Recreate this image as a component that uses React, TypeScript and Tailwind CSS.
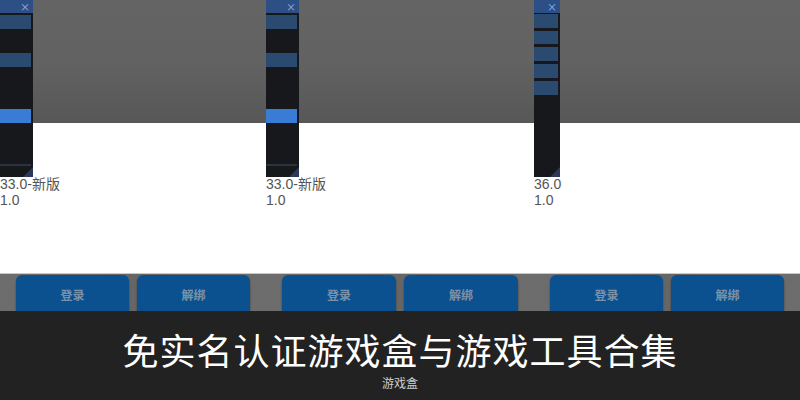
import React from "react";

type Panel = {
  version: string;
  sidebar: "a" | "b";
  sideWidth: string;
};

const panels: Panel[] = [
  { version: "33.0-新版", sidebar: "a", sideWidth: "w-[33px]" },
  { version: "33.0-新版", sidebar: "a", sideWidth: "w-[33px]" },
  { version: "36.0", sidebar: "b", sideWidth: "w-[26px]" },
];

const Sidebar = ({ kind, width }: { kind: "a" | "b"; width: string }) => (
  <div className={`absolute left-0 top-0 h-[177px] ${width} bg-[#17181c] flex flex-col overflow-hidden`}>
    <div className="h-[13px] shrink-0 bg-[#2c4f86] flex items-center justify-end pr-[3px] text-[10px] leading-none text-[#9db8e6]">
      ×
    </div>
    {kind === "a" ? (
      <div className="flex flex-col pr-[2px]">
        <div className="mt-[2px] h-[14px] bg-[#2a4a70]" />
        <div className="mt-[24px] h-[14px] bg-[#2a4a70]" />
        <div className="mt-[42px] h-[14px] bg-[#3a7bd5]" />
        <div className="mt-[41px] h-[2px] bg-[#2c3340]" />
      </div>
    ) : (
      <div className="flex flex-col gap-[3px] pt-[1px] pr-[2px]">
        <div className="h-[14px] bg-[#2a4a70]" />
        <div className="h-[13px] bg-[#2a4a70]" />
        <div className="h-[14px] bg-[#2a4a70]" />
        <div className="h-[14px] bg-[#2a4a70]" />
        <div className="h-[14px] bg-[#2a4a70]" />
      </div>
    )}
    <div className="mt-auto self-end w-0 h-0 border-l-[10px] border-l-transparent border-b-[10px] border-b-[#2b3a5a]" />
  </div>
);

const Btn = ({ label }: { label: string }) => (
  <div className="flex-1 h-[40px] shrink-0 rounded-[6px] bg-[#0b5190] shadow-[0_2px_2px_rgba(0,0,0,0.45)] flex items-center justify-center text-[12px] font-bold text-[#7b91a8]">
    {label}
  </div>
);

const PanelView = ({ p }: { p: Panel }) => (
  <div className="relative h-[311px] overflow-hidden flex flex-col">
    <div className="h-[123px] shrink-0 bg-gradient-to-b from-[#646464] via-[#626262] to-[#575757]" />
    <div className="h-[150px] shrink-0 bg-white pt-[54px] flex flex-col gap-[2px] text-[14px] leading-[14px] text-[#555] font-['Liberation_Sans','Noto_Sans_CJK_SC',sans-serif]">
      <div>{p.version}</div>
      <div>1.0</div>
    </div>
    <div className="flex-1 min-h-0 overflow-hidden border-t border-[#c9c9c9] bg-gradient-to-r from-[#6d6d6d] via-[#666] to-[#6d6d6d] flex items-start gap-[8px] px-[16px] pt-[1px]">
      <Btn label="登录" />
      <Btn label="解绑" />
    </div>
    <Sidebar kind={p.sidebar} width={p.sideWidth} />
  </div>
);

export default function App() {
  return (
    <div className="w-[800px] h-[400px] overflow-hidden bg-[#222] flex flex-col font-['Noto_Sans_CJK_SC',sans-serif]">
      <div className="grid grid-cols-[266px_268px_266px] shrink-0">
        {panels.map((p, i) => (
          <PanelView key={i} p={p} />
        ))}
      </div>
      <div className="flex-1 bg-[#222222] flex flex-col items-center pt-[14px]">
        <div className="text-[36px] leading-[48px] text-white tracking-[1px]">免实名认证游戏盒与游戏工具合集</div>
        <div className="text-[12px] leading-[16px] text-[#cfcfcf] mt-[2px]">游戏盒</div>
      </div>
    </div>
  );
}
